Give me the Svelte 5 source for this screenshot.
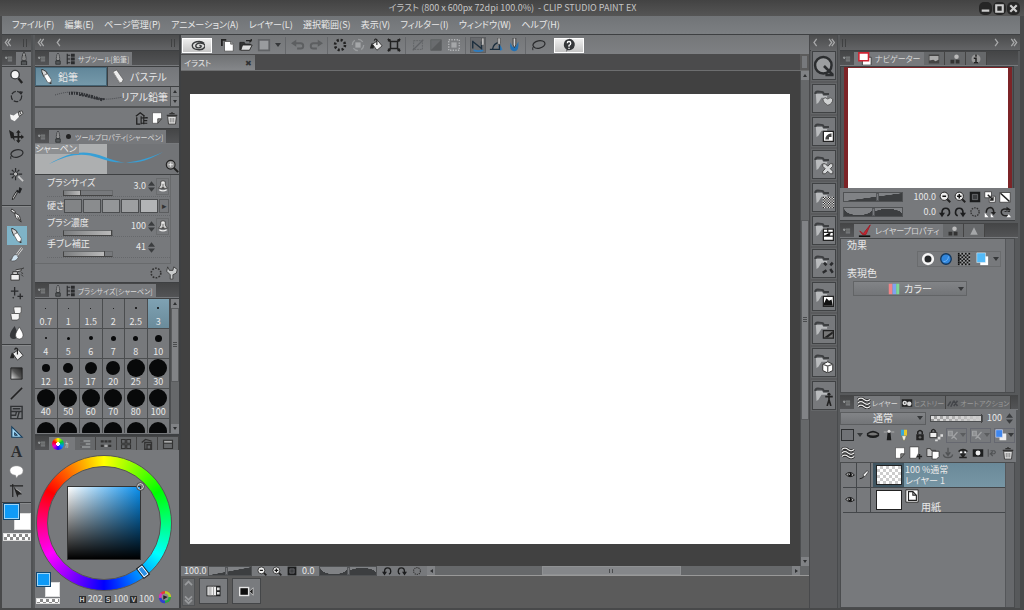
<script>
  const D = '#2a2b2d';
  const W = '#f4f4f4';
  const folder = `<path d="M1 4q0-2 2-2l4 .5 1 1.500h4" fill="none" stroke="#3d3f41" stroke-width="1.600"/><path d="M1.500 4h5l1 1.500h3v1.500H6L3.500 11 2 12z" fill="#b9bbbd"/>`;
  const checks = (x, y, n, c) => {
    let s = '';
    for (let i = 0; i < n; i++) for (let j = 0; j < n; j++) if ((i + j) % 2 === 0) s += `M${x + i} ${y + j}h1v1h-1z`;
    return `<path d="${s}" fill="${c}"/>`;
  };
  const icons = {
    menu: `<path d="M2 5l3 0-1.500 3zM6 5h7M6 8h7M6 11h7" stroke="#999b9d" stroke-width="1.300" fill="#999b9d"/>`,
    nib: `<path d="M8 0C6 3 5.500 6 6 10h4c.5-4 0-7-2-10z" fill="#ccc" stroke="${D}"/><path d="M8 3v7" stroke="${D}"/><path d="M5 10.500h6V15H5z" stroke="${D}" fill="#55585a"/>`,
    sub: `<path d="M3 1v14M3 3h4M3 8h4M3 13h4" stroke="${D}" stroke-width="1.500"/><path d="M8 1h5v4H8zM8 6h5v4H8zM8 11h5v4H8z" fill="${D}"/>`,
    zoom: `<circle cx="6.500" cy="6" r="4.500" fill="${W}" stroke="#3b3d3f" stroke-width="1.500"/><path d="M10 10l4 5" stroke="#222" stroke-width="2.500"/>`,
    rotate: `<circle cx="8" cy="8" r="5.500" fill="none" stroke="${D}" stroke-width="1.300" stroke-dasharray="5 1.500"/><path d="M11 2l4 1-2 3z" fill="${D}"/>`,
    operate: `<path d="M1 7l4 1 4-3 2 4-5 5-4-2z" fill="${W}"/><path d="M10 4l4-1 1 3-4 3z" fill="#ddd" stroke="#444"/><path d="M11 3l2 4" stroke="#333"/>`,
    move: `<path d="M0 2l5 3 1 9-2-3-2 0z" fill="#222"/><path d="M10 4v11M5 9.500h10" stroke="#222" stroke-width="1.800"/><path d="M10 2l2.500 3h-5zM10 16l2.500-3h-5zM16 9.500l-3-2.500v5z" fill="#222"/>`,
    lasso: `<ellipse cx="8.500" cy="7" rx="6.500" ry="4" fill="none" stroke="${D}" stroke-width="1.300" transform="rotate(-12 8 7)"/><path d="M3 9q-2 1-1 4" fill="none" stroke="${D}"/>`,
    wand: `<path d="M7 1v4M7 10v4M1 7.500h4M10 7.500h4M3 3l2 2M11 3L9 5M3 12l2-2" stroke="${D}" stroke-width="1.300"/><circle cx="7" cy="7.500" r="2.300" fill="#bbb" stroke="${D}"/><path d="M10 10l5 5" stroke="#c8c8c8" stroke-width="2"/>`,
    dropper: `<path d="M11 1l3 2-2 4-2-1z" fill="#1f2022"/><path d="M8 5l4 2" stroke="#1f2022" stroke-width="2"/><path d="M9 7l-4 7-1.500.5L4 12l3.500-6z" fill="#ccc" stroke="#222"/>`,
    pen: `<path d="M3 1l4 3-1 2-4-3z" fill="#ddd" stroke="#333"/><path d="M6 5l5 3 2 7-6-5z" fill="${W}" stroke="#333"/><path d="M9 9l3 5" stroke="#333"/>`,
    pencil: `<path d="M3 0l5 3 1 3-4 2-2-5z" fill="#d5d5d5" stroke="#333"/><path d="M5 7l4-2 4 6v5l-4-2z" fill="#fff" stroke="#444" stroke-width=".7"/><path d="M12 13l1 3-2-1z" fill="#111"/>`,
    pastel: `<path d="M2 3l4-2 7 10-1 3-3 1z" fill="#ececec" stroke="#555" stroke-width=".7"/><path d="M2 3l7 11" stroke="#999"/>`,
    brush: `<path d="M14 1L8 9" stroke="#ddd" stroke-width="2.500"/><path d="M14 1L8 9" stroke="#333" stroke-width=".8"/><path d="M8 8q-4 0-5 5l-2 1q6 3 9-3z" fill="#cfe2ef" stroke="#444" stroke-width=".7"/>`,
    airbrush: `<path d="M2 8h9v6H2z" fill="#eee" stroke="#333"/><path d="M4 5h5v3H4zM7 3l6-1v2L9 5" fill="#ccc" stroke="#333"/><path d="M13 6l2 1M13 8l2 2M13 2l3-1" stroke="#333"/>`,
    sparkle: `<path d="M6 1v9M2 5.500h8M12 8v6M9 11h6M4 12l1 1" stroke="${D}" stroke-width="1.400"/>`,
    eraser: `<path d="M5 2l1-1h7v6l-2 1H6z" fill="#f5f5f5" stroke="#444" stroke-width=".8"/><path d="M2 9l1-1h7l1 1v4l-2 2H3z" fill="#f5f5f5" stroke="#444" stroke-width=".8"/><path d="M11 8l2-1v4l-2 3z" fill="#777"/>`,
    blend: `<path d="M6 1C3 5 1 8 1 11a4 4 0 0 0 8 0C9 8 8 5 6 1z" fill="#35373a"/><path d="M11 2C9 6 7 8 7 11a4 4 0 0 0 8 0c0-3-2-5-4-9z" fill="#fff" stroke="#333" stroke-width=".6"/>`,
    bucket: `<path d="M1 12l2-6 4 1-2 5z" fill="#222"/><path d="M4 7l6-4 5 6-6 5z" fill="#eee" stroke="#333"/><path d="M9 8V2q-2-2-3 1" fill="none" stroke="#222" stroke-width="1.300"/>`,
    grad: `<defs><linearGradient id="gg" x1="0" y1="1" x2="1" y2="0"><stop offset="0" stop-color="#eee"/><stop offset=".5" stop-color="#555"/><stop offset="1" stop-color="#222"/></linearGradient></defs><path d="M2 2h12v12H2z" fill="url(#gg)" stroke="#222"/>`,
    line: `<path d="M2 14L14 2" stroke="#222" stroke-width="1.600"/>`,
    frame: `<path d="M2 1.500h12v13H2zM4 4h8M2 7h12M8 7l-1 4H2M11 7l-2 7" fill="none" stroke="#303234" stroke-width="1.500"/>`,
    ruler: `<path d="M3 2l11 11H3z" fill="#a3d8f5" stroke="#173d5c" stroke-width="1.200"/><path d="M6 8l3 3H6z" fill="#77797c" stroke="#173d5c"/>`,
    balloon: `<path d="M8 2c4 0 7 2 7 5s-2 5-5 5l-2 3-1-3C4 12 1 10 1 7s3-5 7-5z" fill="#fff" stroke="#999" stroke-width=".6"/>`,
    vector: `<path d="M1 3h14M4 1v14" stroke="#222" stroke-width="1.200"/><path d="M5 4l9 8-4 .5-1 3z" fill="#222"/><path d="M7 6l6 4" stroke="#aaa"/>`,
    spiral: `<path d="M15 5.500C11 2 2 4 2.500 8.500S13 14 15.500 10 11 4.500 8 6s-2 5 1.500 4.500S12.500 7.500 10 8" fill="none" stroke="#3a3c3e" stroke-width="1.500"/>`,
    newdoc: `<path d="M1 1v8M1 2h5" stroke="#222" stroke-width="2"/><path d="M4 4h7l3 3v8H4z" fill="#fff" stroke="#333" stroke-width=".7"/><path d="M11 4v3h3" fill="#aaa" stroke="#333" stroke-width=".7"/>`,
    open: `<path d="M1 14V5h5l1 2h6v2" fill="#333" stroke="#222"/><path d="M4 8h11l-3 6H2z" fill="#ddd" stroke="#222"/><path d="M8 3h6V1M14 3l-2 2" fill="none" stroke="#222" stroke-width="1.500"/>`,
    save: `<path d="M2 2h12v12H2z" fill="#999b9e" stroke="#606265" stroke-width="2"/>`,
    undo: `<path d="M3 6h8q3 0 3 3t-3 3H7" fill="none" stroke="#5d5f61" stroke-width="2.200"/><path d="M0 6l6-4v8z" fill="#5d5f61"/>`,
    redo: `<path d="M13 6H5q-3 0-3 3t3 3h4" fill="none" stroke="#5d5f61" stroke-width="2.200"/><path d="M16 6l-6-4v8z" fill="#5d5f61"/>`,
    dots: `<circle cx="8" cy="8" r="5.700" fill="none" stroke="#222" stroke-width="3" stroke-dasharray="2.400 2.080"/>`,
    dotsThin: `<circle cx="8" cy="8" r="5.500" fill="none" stroke="#333" stroke-width="1.800" stroke-dasharray="2 1.450"/>`,
    target: `<circle cx="8" cy="8" r="6.500" fill="none" stroke="#999b9d" stroke-width="1.500" stroke-dasharray="6 4"/><path d="M5 5h6v6H5z" fill="#a5a7a9"/>`,
    transform: `<path d="M4 4h8v8H4zM1 1l4 4M15 1l-4 4M1 15l4-4M15 15l-4-4" fill="none" stroke="#222" stroke-width="1.700"/><path d="M1 1h3v3H1zM12 1h3v3h-3zM1 12h3v3H1zM12 12h3v3h-3z" fill="#222"/>`,
    desel: `<path d="M3 3h10v10H3z" fill="none" stroke="#606265" stroke-dasharray="2 1"/><path d="M2 14L14 2" stroke="#606265" stroke-width="1.500"/>`,
    invsel: `<path d="M2 2h12v12H2z" fill="#6a6c6f" stroke="#5d5f61"/><path d="M14 2v12H2z" fill="#595b5d"/>`,
    selfill: `<path d="M2 2h12v12H2z" fill="none" stroke="#b4b6b8" stroke-width="1.500" stroke-dasharray="1.500 1.500"/><path d="M5 5h6v6H5z" fill="#a5a7a9"/>`,
    snap1: `<path d="M3 14q5 2 11 0" stroke="#2c7cc0" stroke-width="2" fill="none"/><path d="M2 3v9M2 4l10 8V4" stroke="#1d2f3e" stroke-width="1.600" fill="none"/><path d="M12 0v7l1.500 2L15 7V0z" fill="#bbb" stroke="#333" stroke-width=".6"/>`,
    snap2: `<path d="M12 9l2 5" stroke="#2c7cc0" stroke-width="3"/><path d="M1 13h11V5q-7 1-8 8" stroke="#1d2f3e" stroke-width="1.600" fill="none"/><path d="M10 0v6l1.500 2L13 6V0z" fill="#bbb" stroke="#333" stroke-width=".6"/>`,
    snap3: `<path d="M4 5q-2 9 4 10t5-11l-3 6H6z" fill="#2471b3"/><path d="M7 0v8l1.500 3L10 8V0z" fill="#ccc" stroke="#222" stroke-width=".8"/>`,
    help: `<path d="M8 1a6.500 6.500 0 1 1-1.500 12.800L5 16l.2-3A6.500 6.500 0 0 1 8 1z" fill="#35373a"/><path d="M6 6q0-2 2-2t2 2-2 2.500V10M8 11v1.500" stroke="#fff" stroke-width="1.500" fill="none"/>`,
    tag: `<path d="M1 6l5-4 5 4M2 7v8h4" fill="none" stroke="#222" stroke-width="1.500"/><path d="M7 6v9M7 8h7v-1M7 14h7M10 11h4M10 6v9" stroke="#222" stroke-width="1.300"/>`,
    page: `<path d="M2 1h12v8l-5 6H2z" fill="#fff" stroke="#333" stroke-width=".7"/><path d="M14 9H9v6z" fill="#888" stroke="#333"/>`,
    pageadd: `<path d="M1 1h10v7l-3 6H1z" fill="#fff" stroke="#333" stroke-width=".7"/><path d="M12 9v6M9 12h6" stroke="#222" stroke-width="1.700"/>`,
    trash: `<path d="M3 6h10l-1 9H4z" fill="#ddd" stroke="#333"/><path d="M2 5h12M5 3h6M8 1v2" stroke="#333" stroke-width="1.500"/><path d="M6 8v5M8 8v5M10 8v5" stroke="#777"/>`,
    mag: `<circle cx="6.500" cy="6.500" r="5" fill="#999" stroke="#222" stroke-width="1.300"/><path d="M4 6.500h5M6.500 4v5" stroke="#eee"/><path d="M10 10l5 5" stroke="#222" stroke-width="2.200"/>`,
    pressure: `<path d="M5 2q3-2 6 0v5l3 4H2l3-4z" fill="#e8e8e8" stroke="#333"/><path d="M3 13q5 3 10 0" stroke="#eee" stroke-width="1.500" fill="none"/><path d="M8 5v6M6 9l2 2 2-2" stroke="#333" fill="none"/>`,
    wrench: `<path d="M3 1l2 4 4 0 1-4 4 3-1 4-4 2v5H6v-5L2 6z" fill="#c8cacb" stroke="#333" stroke-width=".9"/>`,
    zoomout: `<circle cx="7" cy="7" r="5.500" fill="#eee" stroke="#222" stroke-width="1.300"/><path d="M4.500 7h5" stroke="#111" stroke-width="2"/><path d="M11 11l4 4" stroke="#222" stroke-width="2.500"/>`,
    zoomin: `<circle cx="7" cy="7" r="5.500" fill="#eee" stroke="#222" stroke-width="1.300"/><path d="M4 7h6M7 4v6" stroke="#111" stroke-width="2"/><path d="M11 11l4 4" stroke="#222" stroke-width="2.500"/>`,
    fit: `<path d="M1 1h14v14H1z" fill="#1b1c1d"/><path d="M4.500 4.500h7v7h-7z" fill="#3c3e40" stroke="#77797c"/>`,
    rotl: `<path d="M4 12V9q0-6 5-6t5 6q0 3-3 4" fill="none" stroke="#1c1d1e" stroke-width="2.200"/><path d="M0 9h8l-4 6z" fill="#1c1d1e"/>`,
    rotr: `<path d="M12 12V9q0-6-5-6T2 9q0 3 3 4" fill="none" stroke="#1c1d1e" stroke-width="2.200"/><path d="M16 9H8l4 6z" fill="#1c1d1e"/>`,
    fitnav: `<path d="M1 1h9v8H1zM7 7h8v8H7z" fill="#fff" stroke="#333"/><path d="M5 5l7 7M12 8v4H8" stroke="#222" stroke-width="1.800" fill="none"/>`,
    fitdiag: `<path d="M1 2h14v13H1z" fill="#fff" stroke="#333"/><path d="M2 3l12 11" stroke="#222" stroke-width="2.200"/>`,
    fliph: `<path d="M3 9q0-7 6-7 4 1 4 7" fill="none" stroke="#222" stroke-width="2"/><path d="M9 8h7l-3 4z" fill="#222"/><path d="M1 9l5 6H1zM13 15l-4-5v5z" fill="#fff"/>`,
    flipv: `<path d="M14 5Q3 2 3 8t9 5" fill="none" stroke="#222" stroke-width="2"/><path d="M10 1l6 4-6 3zM6 8h9l-2-3" fill="#222"/><path d="M10 15h6l-3-4z" fill="#fff"/>`,
    navi: `<path d="M5 6h10v9H5z" fill="#fff" stroke="#333"/><path d="M1 1h11v9H1z" fill="#fff" stroke="#cf2433" stroke-width="1.800"/>`,
    pic: `<path d="M1 2h14v12H1z" fill="#444"/><path d="M2 10V4h12v5l-4 2-3-2z" fill="#aaa"/>`,
    people: `<circle cx="10" cy="5" r="3" fill="#bbb"/><path d="M2 9h5v5H2zM9 9h5v5H9z" fill="#333"/>`,
    info: `<circle cx="8" cy="8" r="6" fill="#999"/><path d="M8 2v3M8 6v7M5 7h3M5 13h6" stroke="#222" stroke-width="2"/>`,
    redpen: `<path d="M2 8l4 3 8-10-5 11H5z" fill="#c52632" stroke="#a01c26"/><path d="M1 13h13v3H1z" fill="#0e0e0e"/>`,
    waves: `<path d="M1 4q3.500-3 7 0t7 0M1 8q3.500-3 7 0t7 0M1 12q3.500-3 7 0t7 0" fill="none" stroke="#222" stroke-width="3.200"/><path d="M1 4q3.500-3 7 0t7 0M1 8q3.500-3 7 0t7 0M1 12q3.500-3 7 0t7 0" fill="none" stroke="#eee" stroke-width="1.300"/>`,
    tri: `<path d="M8 3l5 10H3z" fill="#a5a7a9"/>`,
    film: `<path d="M1 3h14v10H1z" fill="#222"/><circle cx="5" cy="8" r="3" fill="#ddd"/><circle cx="11" cy="9" r="3" fill="#ddd"/><circle cx="5" cy="8" r="1" fill="#222"/>`,
    script: `<path d="M1 12l4-6M5 13l4-8M9 12l5-7M9 5l5 7" stroke="#44464a" stroke-width="2"/>`,
    edge: `<circle cx="8" cy="8" r="5.500" fill="#26282a" stroke="#f6f6f6" stroke-width="3"/>`,
    blue: `<circle cx="8" cy="8" r="6" fill="#3186dc" stroke="#14375c" stroke-width="1.500"/><path d="M5 11q5 0 6-6" fill="none" stroke="#74b6f5"/>`,
    tone: `<path d="M1 1h14v14H1z" fill="#9b9d9f"/>` + [1, 3, 5, 7, 9, 11, 13].map((y, r) => [1, 5, 9, 13].map((x) => `<path d="M${x + (r % 2 ? 2 : 0) > 13 ? 1 : x + (r % 2 ? 2 : 0)} ${y}h2v2h-2z" fill="#111"/>`).join('')).join(''),
    layercol: `<path d="M6 5h9v10H6z" fill="#fff"/><path d="M2 1h10v11H2z" fill="#53baf8" stroke="#eee" stroke-width=".6"/>`,
    rgb: `<path d="M1 1h5v14H1z" fill="#f08487"/><path d="M6 1h5v14H6z" fill="#7fa3ef"/><path d="M11 1h4v14h-4z" fill="#7ed796"/>`,
    mask: `<path d="M1 6q7-6 14 0v3q-7 5-14 0z" fill="#1c1d1e"/><path d="M2 7q6-4 12 0-6 3-12 0z" fill="#777"/>`,
    lighthouse: `<path d="M6 5h4l1 10H5z" fill="#1c1d1e"/><circle cx="8" cy="3" r="2" fill="#ddd"/><path d="M1 4h4M11 4h4" stroke="#bbb"/>`,
    marker: `<path d="M4 1h4v8H4z" fill="#36a9d8"/><path d="M8 1h4v8H8z" fill="#e6c72c"/><path d="M5 9h6l-2 6H7z" fill="#eceae0" stroke="#6d6e3f" stroke-width=".5"/>`,
    lock: `<path d="M3 7h10v8H3z" fill="#222"/><path d="M5 7V4q3-4 6 0v3" fill="none" stroke="#222" stroke-width="2"/><path d="M8 9v4M6 11h4" stroke="#888"/>`,
    locka: `<path d="M1 5h8v6H1z" fill="#eee" stroke="#222"/><path d="M3 5V3q2-3 4 0v2" fill="none" stroke="#222" stroke-width="1.500"/><path d="M10 10h3v3h-3zM13 7h3v3h-3zM7 13h3v2H7z" fill="#ddd"/>`,
    off: `<path d="M2 3h5v6H2zM6 13l8-9M8 9l5 5" fill="#8e9092" stroke="#a0a2a4" stroke-width="1.600"/>`,
    palette: `<path d="M6 6h9v9H6z" fill="#eee"/><path d="M1 1h9v10H1z" fill="#3f87ee" stroke="#dde" stroke-width=".8"/>`,
    folders: `<path d="M1 3h4l1 2h5v7H1z" fill="#ccc" stroke="#333"/><path d="M7 6h8v6l-3 3H7z" fill="#fff" stroke="#333"/>`,
    down: `<path d="M8 1v9M5 7l3 4 3-4M2 10q0 4 6 4t6-4" fill="none" stroke="#515355" stroke-width="1.800"/>`,
    downd: `<path d="M2 6q6-5 12 0M8 4v8M5 9l3 4 3-4M3 14h10" fill="none" stroke="#222" stroke-width="2"/><path d="M4 7h3M10 7h2" stroke="#fff" stroke-width="2"/>`,
    maskbtn: `<path d="M1 3h14v10H1z" fill="#1d1e1f"/><circle cx="8" cy="8" r="3.300" fill="#eee"/>`,
    arr: `<path d="M3 3v10M6 5h5q3 2 0 4H6l3-3M6 9l3 3" fill="none" stroke="#515355" stroke-width="1.500"/>`,
    eye: `<path d="M1 7q7-7 14 1-7 6-14-1z" fill="#aaa" stroke="#1c1d1e" stroke-width="1.500"/><circle cx="8" cy="7.500" r="3" fill="#111"/><circle cx="7" cy="6.500" r="1" fill="#fff"/>`,
    edit: `<path d="M1 14q6 0 7-5" stroke="#222" stroke-width="1.500" fill="none"/><path d="M7 7l6-6 2 2-5 7-3 1z" fill="#eee" stroke="#222"/>`,
    paper: `<path d="M1 1h14v14H1z" fill="#fff" stroke="#222"/><path d="M4 3h5l4 4v6H4zM9 3v4h4" fill="#fff" stroke="#222" stroke-width="1.300"/>`,
    wheel2: `<circle cx="8" cy="8" r="7" fill="#e73a36"/><path d="M8 8L8 1A7 7 0 0 1 15 8z" fill="#b3d22c"/><path d="M8 8h7a7 7 0 0 1-7 7z" fill="#22a949"/><path d="M8 8v7A7 7 0 0 1 1 9z" fill="#2f3fd0"/><path d="M8 8L1 9a7 7 0 0 1 2-6z" fill="#cf35c4"/><circle cx="8" cy="8" r="4" fill="#8b8d8f"/><path d="M6 6l5 2-5 3z" fill="#222"/>`,
    t1: `<path d="M1 4h14M1 8h14M1 12h14" stroke="#97999b" stroke-width="2"/><path d="M1 4h5M1 8h8M1 12h3" stroke="#333" stroke-width="1.500"/>`,
    t2: `<path d="M1 3h4v3H1zM6 3h4v3H6zM11 3h4v3h-4zM1 9h4v3H1zM11 9h4v3h-4z" fill="#333"/><path d="M6 9h4v3H6z" fill="#aaa"/>`,
    t3: `<path d="M2 2h5v5H2zM9 2h5v5H9zM2 9h5v5H2zM9 9h5v5H9z" fill="none" stroke="#333" stroke-width="1.500"/>`,
    t4: `<path d="M1 6l5-4 8 2M5 6h9v9H5zM8 9h5v6H8z" fill="none" stroke="#333" stroke-width="1.700"/>`,
    t5: `<path d="M2 3h12v11H2zM2 7h12" fill="none" stroke="#333" stroke-width="1.500"/><path d="M3 4h10v2H3z" fill="#aaa"/>`,
    timeline: `<path d="M0 2h16v12H0z" fill="#1d1e1f"/><path d="M1 3h10v10H1z" fill="#eee"/><path d="M3 3v10M5 3v10M8 3v10" stroke="#999"/><path d="M12 4h3v3h-3zM12 9h3v3h-3z" fill="#ddd"/>`,
    camera: `<path d="M0 3h11v10H0z" fill="#e5e5e5"/><path d="M1.500 4.500h8v7h-8z" fill="#0e0e0e"/><path d="M11 8l4-4v8z" fill="#222" stroke="#ddd" stroke-width=".8"/>`,
    Q: `<circle cx="7.500" cy="7.500" r="6" fill="#9c9ea0" stroke="#2b2d2f" stroke-width="1.800"/><path d="M8 8l6.500 6.500M9 14.500h6" stroke="#2b2d2f" stroke-width="1.900"/>`,
    f1: folder + `<path d="M7 8q2-2 4 0 2-2 4 0 0 4-4 5-4-2-4-5z" fill="#cfd1d2" stroke="#444" stroke-width=".6"/>`,
    f2: folder + `<path d="M7.500 7.500h8v8h-8z" fill="#fff" stroke="#222"/><path d="M9 14q0-4 5-5v3l-2 0v2z" fill="#444"/>`,
    f3: folder + `<path d="M7 7l2 0 2 2 2-2h2v2l-2 2 2 2v2h-2l-2-2-2 2H7v-2l2-2-2-2z" fill="#d5d7d8" stroke="#333" stroke-width=".6"/>`,
    f4: folder + `<path d="M7 7h9v9H7z" fill="#eee"/>` + checks(7, 7, 9, '#222'),
    f5: folder + `<path d="M7.500 6.500h8v9h-8z" fill="#fff" stroke="#222"/><path d="M8 9h8M11 6v3M8 12h4l1-3M12 12h4" stroke="#222"/>`,
    f6: folder + `<path d="M8 7l2 2M15 7l-2 2M7 15l3-2M15 15l-2-3" stroke="#2a2b2d" stroke-width="2"/>`,
    f7: folder + `<path d="M7.500 7.500h8v8h-8z" fill="#fff" stroke="#222"/><path d="M8 15v-2l2-4 2 2 2-1 1 5z" fill="#111"/>`,
    f8: folder + `<path d="M7.500 8.500h8v6h-8z" fill="#777" stroke="#222"/><path d="M8 14l7-5v2l-4 3z" fill="#222"/>`,
    f9: folder + `<path d="M7 9l4-2 4 2v5l-4 2-4-2z" fill="#fff" stroke="#333" stroke-width=".8"/><path d="M7 9l4 1.500L15 9M11 10.500V16" fill="none" stroke="#555"/>`,
    f10: folder + `<circle cx="12" cy="6.500" r="1.200" fill="#222"/><path d="M9 8.500h6M12 8v4M12 11l-1.500 5M12 11l1.500 5" stroke="#222" stroke-width="1.300"/>`
  };

  const menus = ['ファイル(F)', '編集(E)', 'ページ管理(P)', 'アニメーション(A)', 'レイヤー(L)', '選択範囲(S)', '表示(V)', 'フィルター(I)', 'ウィンドウ(W)', 'ヘルプ(H)'];
  const toolGroups = [
    [['zoom', 'ズーム'], ['rotate', '回転'], ['operate', '操作'], ['move', 'レイヤー移動'], ['lasso', '選択範囲'], ['wand', '自動選択'], ['dropper', 'スポイト']],
    [['pen', 'ペン'], ['pencil', '鉛筆'], ['brush', '筆'], ['airbrush', 'エアブラシ'], ['sparkle', 'デコレーション'], ['eraser', '消しゴム'], ['blend', '色混ぜ']],
    [['bucket', '塗りつぶし'], ['grad', 'グラデーション'], ['line', '図形'], ['frame', 'コマ枠'], ['ruler', '定規'], ['text', 'テキスト'], ['balloon', 'フキダシ'], ['vector', '線修正']]
  ];
  const sizes = [
    ['0.7', 1], ['1', 1], ['1.5', 1], ['2', 1], ['2.5', 2], ['3', 2],
    ['4', 2], ['5', 3], ['6', 4], ['7', 5], ['8', 5], ['10', 7],
    ['12', 8], ['15', 10], ['17', 12], ['20', 14], ['25', 18], ['30', 18],
    ['40', 18], ['50', 18], ['60', 18], ['70', 18], ['80', 18], ['100', 18]
  ];
  const docks = ['Q', 'f1', 'f2', 'f3', 'f4', 'f5', 'f6', 'f7', 'f8', 'f9', 'f10'];
  let size = $state('3');
  let tool = $state('pencil');
</script>

{#snippet ico(name, s = 's14')}
  <svg class="ico {s}" viewBox="0 0 16 16" aria-hidden="true">{@html icons[name]}</svg>
{/snippet}
{#snippet btn(name, label, s = 's14')}
  <button class="plain" aria-label={label}>{@render ico(name, s)}</button>
{/snippet}
{#snippet chev(kind)}
  <svg class="chev" viewBox="0 0 8 10" aria-hidden="true">
    <path d={{ ll: 'M4 1L1 5l3 4M7 1L4 5l3 4', l: 'M5 1L2 5l3 4', r: 'M3 1l3 4-3 4', rr: 'M1 1l3 4-3 4M4 1l3 4-3 4' }[kind]} />
  </svg>
{/snippet}
{#snippet spin()}
  <svg class="spin" viewBox="0 0 8 12" aria-hidden="true"><path d="M4 0l4 5H0zM4 12l4-5H0z" /></svg>
{/snippet}
{#snippet vbar(cls)}
  <div class="vbar {cls}"><i class="up"></i><b></b><i class="dn"></i></div>
{/snippet}
{#snippet pair()}
  <div class="pair"><span class="back"></span><span class="fore"></span><span class="clear"></span></div>
{/snippet}

<div class="app">
  <header class="title">
    <h1>イラスト (800 x 600px 72dpi 100.0%)&nbsp; - CLIP STUDIO PAINT EX</h1>
    <div class="win">
      <button aria-label="最小化"><svg viewBox="0 0 12 12"><path d="M2.500 8h7" /></svg></button>
      <button aria-label="最大化"><svg viewBox="0 0 12 12"><path d="M3 3h6v6H3z" /></svg></button>
      <button aria-label="閉じる"><svg viewBox="0 0 12 12"><path d="M3 3l6 6M9 3L3 9" /></svg></button>
    </div>
  </header>
  <nav class="menu">
    <div class="items">
      {#each menus as m}<button>{m}</button>{/each}
    </div>
  </nav>

  <main>
    <aside class="tools">
      <div class="grip">{@render chev('ll')}<em></em></div>
      <div class="tabs"><span class="mi">{@render ico('menu', 's10')}</span><span class="tab on">{@render ico('nib')}</span></div>
      <div class="toolbody">
        {#each toolGroups as g}
          <div class="group" class:long={g.length > 7}>
            {#each g as [t, label]}
              <button class:sel={tool === t} aria-label={label} onclick={() => (tool = t)}>
                {#if t === 'text'}<span class="A">A</span>{:else}{@render ico(t, 's15')}{/if}
              </button>
            {/each}
          </div>
        {/each}
        {@render pair()}
      </div>
    </aside>

    <aside class="left">
      <div class="grip">{@render chev('ll')}{@render chev('l')}<em></em></div>
      <section class="subtool">
        <div class="tabs"><span class="mi">{@render ico('menu', 's10')}</span><span class="tab on">{@render ico('nib', 's12')}{@render ico('sub', 's12')}サブツール[鉛筆]</span></div>
        <div class="two">
          <button class="sel">{@render ico('pencil', 's15')}鉛筆</button>
          <button>{@render ico('pastel', 's15')}パステル</button>
        </div>
        <div class="real">
          <svg viewBox="0 0 80 16" aria-hidden="true">
            <path d="M6 6C22 1 30 3 42 7s16 4 32 1" fill="none" stroke="#4a4c50" stroke-width="1" stroke-dasharray="1 1" />
            <path d="M20 4.500C32 3 44 8 54 11" fill="none" stroke="#303236" stroke-width="3" stroke-dasharray="1 1 2 1" />
            <path d="M30 6C38 6 46 11 56 10" fill="none" stroke="#303236" stroke-width="2" stroke-dasharray="2 1" />
          </svg>
          <span>リアル鉛筆</span>
          {@render vbar('nothumb')}
        </div>
        <div class="foot">{@render btn('tag', '追加素材')}{@render btn('page', '複製', 's12')}{@render btn('trash', '削除')}</div>
      </section>

      <section class="prop">
        <div class="tabs"><span class="mi">{@render ico('menu', 's10')}</span><span class="tab on">{@render ico('nib', 's12')}<u class="dot"></u>ツールプロパティ[シャーペン]</span></div>
        <div class="preview">
          <span>シャーペン</span>
          <svg viewBox="0 0 144 29" aria-hidden="true"><path d="M14 20C34 8 48 6 64 11s32 16 64-3C96 22 80 20 64 14S34 10 14 20z" fill="#379fd6" /></svg>
          {@render btn('mag', '詳細')}
        </div>
        <div class="rows">
          <div class="row">
            <label for="bs">ブラシサイズ</label><output>3.0</output>{@render spin()}<button class="press" aria-label="筆圧">{@render ico('pressure', 's12')}</button>
            <input id="bs" type="range" value="34" style="--v:34%" />
          </div>
          <div class="row hard">
            <span>硬さ</span>
            <div class="boxes">{#each [1, 2, 3, 4, 5] as h}<button class="h{h}" aria-label="硬さ {h}"></button>{/each}</div>
            <button class="next" aria-label="次へ">▸</button>
          </div>
          <div class="row">
            <label for="bd">ブラシ濃度</label><output>100</output>{@render spin()}<button class="press" aria-label="筆圧">{@render ico('pressure', 's12')}</button>
            <input id="bd" type="range" value="100" style="--v:100%" />
          </div>
          <div class="row">
            <label for="st">手ブレ補正</label><output>41</output>{@render spin()}<i></i>
            <input id="st" type="range" value="85" style="--v:85%" />
          </div>
        </div>
        <div class="foot">{@render btn('dotsThin', '初期設定')}{@render btn('wrench', '設定')}</div>
      </section>

      <section class="bsize">
        <div class="tabs"><span class="mi">{@render ico('menu', 's10')}</span><span class="tab on">{@render ico('nib', 's12')}{@render ico('sub', 's12')}ブラシサイズ[シャーペン]</span></div>
        <div class="gridwrap">
          <div class="sizes">
            {#each sizes as [n, d]}
              <button class:sel={size === n} onclick={() => (size = n)}><span><i style="width:{d}px;height:{d}px"></i></span>{n}</button>
            {/each}
            {#each [1, 2, 3, 4, 5, 6] as n}<div class="cut"><i></i></div>{/each}
          </div>
          {@render vbar('brushbar')}
        </div>
      </section>

      <section class="color">
        <div class="tabs">
          <span class="mi">{@render ico('menu', 's10')}</span>
          <span class="tab on wheeltab"><i class="mini"></i>ｶ</span>
          {#each ['t1', 't2', 't3', 't4', 't5'] as t}<span class="tab off">{@render ico(t, 's12')}</span>{/each}
        </div>
        <div class="wheelbox">
          <div class="wheel"><div class="hole"><div class="sq"><i></i></div></div><b></b></div>
          <div class="cfoot">
            {@render pair()}
            <div class="hsv"><kbd>H</kbd>202<kbd>S</kbd>100<kbd>V</kbd>100</div>
            {@render btn('wheel2', '色空間の切り替え')}
          </div>
        </div>
      </section>
    </aside>

    <section class="center">
      <div class="cmd">
        <button class="lit" aria-label="CLIP STUDIO">{@render ico('spiral', 's15')}</button>
        <div class="cg">{@render btn('newdoc', '新規')}{@render btn('open', '開く')}{@render btn('save', '保存')}<span class="caret"></span></div>
        <div class="cg sep">{@render btn('undo', '取り消し')}{@render btn('redo', 'やり直し')}</div>
        <div class="cg sep">{@render btn('dots', '消去')}{@render btn('target', '選択範囲外を消去')}{@render btn('bucket', '塗りつぶし')}{@render btn('transform', '拡大・縮小・回転')}</div>
        <div class="cg sep">{@render btn('desel', '選択を解除')}{@render btn('invsel', '選択範囲を反転')}{@render btn('selfill', '選択範囲の境界線')}</div>
        <div class="cg sep snaps">{@render btn('snap1', '定規にスナップ')}{@render btn('snap2', '特殊定規にスナップ')}{@render btn('snap3', 'グリッドにスナップ')}</div>
        <div class="cg sep">{@render btn('lasso', 'アシスタント', 's15')}</div>
        <button class="lit help" aria-label="ヘルプ">{@render ico('help')}</button>
      </div>
      <div class="doctabs"><button class="doc">イラスト<span>✖</span></button><i class="tick"></i></div>
      <div class="work">
        <div class="desk"><div class="sheet"></div></div>
        {@render vbar('deskbar')}
      </div>
      <div class="status">
        <output>100.0</output><input class="wedge" type="range" aria-label="表示倍率" value="40" />
        {@render btn('zoomout', '縮小', 's10')}{@render btn('zoomin', '拡大', 's10')}{@render btn('fit', '100%', 's10')}
        <output class="ang">0.0</output><input class="bell" type="range" aria-label="表示角度" value="50" />
        {@render btn('rotl', '左回転', 's10')}{@render btn('rotr', '右回転', 's10')}{@render btn('dotsThin', '回転をリセット', 's10')}
        <div class="hbar"><i class="lf"></i><div><b></b></div><i class="rt"></i></div>
      </div>
      <div class="bottom">
        <div class="bchev"><svg viewBox="0 0 12 30" aria-hidden="true"><path d="M2 7l4-4 4 4M2 20l4 4 4-4M2 24l4 4 4-4" /></svg></div>
        <button aria-label="タイムライン">{@render ico('timeline', 's17')}</button>
        <button aria-label="アニメーション">{@render ico('camera', 's15')}</button>
      </div>
    </section>

    <aside class="dock">
      <div class="grip">{@render chev('l')}{@render chev('rr')}</div>
      {#each docks as d}<button aria-label="素材 {d}">{@render ico(d, d === 'Q' ? 's22' : 's20')}</button>{/each}
    </aside>

    <aside class="right">
      <div class="grip end"><em></em>{@render chev('r')}{@render chev('rr')}</div>
      <section class="nav">
        <div class="tabs"><span class="mi">{@render ico('menu', 's10')}</span><span class="tab on">{@render ico('navi')}ナビゲーター</span>
          {#each ['pic', 'people', 'info'] as t}<span class="tab off">{@render ico(t, 's12')}</span>{/each}</div>
        <div class="view"><div></div></div>
        <div class="navctl">
          <input class="wedge" type="range" aria-label="倍率" value="58" /><output>100.0</output>
          {@render btn('zoomout', '縮小', 's12')}{@render btn('zoomin', '拡大', 's12')}{@render btn('fit', '100%', 's12')}{@render btn('fitnav', 'フィッティング', 's12')}{@render btn('fitdiag', '全体表示', 's12')}
          <input class="bell" type="range" aria-label="角度" value="50" /><output>0.0</output>
          {@render btn('rotl', '左回転', 's12')}{@render btn('rotr', '右回転', 's12')}{@render btn('dotsThin', 'リセット', 's12')}{@render btn('fliph', '左右反転', 's12')}{@render btn('flipv', '上下反転', 's12')}
        </div>
      </section>
      <section class="lprop">
        <div class="tabs"><span class="mi">{@render ico('menu', 's10')}</span><span class="tab on">{@render ico('redpen')}レイヤープロパティ</span>
          {#each ['people', 'tri'] as t}<span class="tab off">{@render ico(t, 's12')}</span>{/each}</div>
        <div class="lbody">
          <div class="lmain">
            <h2>効果</h2>
            <div class="fx">{@render btn('edge', '境界効果')}{@render btn('blue', '質感')}{@render btn('tone', 'トーン')}{@render btn('layercol', 'レイヤーカラー')}<span class="caret"></span></div>
            <h2>表現色</h2>
            <button class="combo">{@render ico('rgb', 's12')}カラー<span class="caret"></span></button>
          </div>
          <div class="trough"></div>
        </div>
      </section>
      <section class="layers">
        <div class="tabs"><span class="mi">{@render ico('menu', 's10')}</span><span class="tab on">{@render ico('waves')}レイヤー</span><span class="tab off">{@render ico('film', 's12')}ヒストリー</span><span class="tab off">{@render ico('script', 's12')}オートアクション</span></div>
        <div class="blend"><button class="mode">通常<span class="caret"></span></button><input class="opac" type="range" aria-label="不透明度" value="100" /><output>100</output>{@render spin()}</div>
        <div class="tb"><button class="plain box" aria-label="パレットカラー"></button><span class="caret"></span>{@render btn('mask', 'クリップ')}{@render btn('lighthouse', '参照', 's12')}{@render btn('marker', '下描き', 's12')}{@render btn('lock', 'ロック', 's12')}{@render btn('locka', '透明ピクセルをロック')}<span class="fr">{@render ico('off', 's12')}<span class="caret dim"></span></span><span class="fr">{@render ico('off', 's12')}<span class="caret dim"></span></span><span class="fr">{@render ico('palette', 's12')}<span class="caret"></span></span></div>
        <div class="tb">{@render btn('waves', '2ペイン')}<span class="sp"></span>{@render btn('page', '新規ラスター', 's12')}{@render btn('pageadd', '新規ベクター')}{@render btn('folders', '新規フォルダー')}{@render btn('down', '転写', 's12')}{@render btn('downd', '結合', 's12')}{@render btn('maskbtn', 'マスク', 's12')}{@render btn('arr', '適用', 's12')}{@render btn('trash', '削除')}</div>
        <div class="lbody">
          <ul>
            <li class="sel">{@render btn('eye', '表示', 's10')}<span class="pn">{@render ico('edit', 's10')}</span><div class="thumbcell"><i class="thumb chk"></i></div><p>100 %通常<br />レイヤー 1</p></li>
            <li>{@render btn('eye', '表示', 's10')}<span class="pn"></span><div class="thumbcell"><i class="thumb"></i></div><span class="ps">{@render ico('paper')}</span><p class="low">用紙</p></li>
          </ul>
          <div class="trough"></div>
        </div>
      </section>
    </aside>
  </main>
</div>

<style>
  :global(body) { margin: 0; background: #4b4b4c; }
  .app {
    --p: #77797c; --d: #4e4f51; --line: #3e4042;
    min-height: 100vh; box-sizing: border-box; padding: 0 4px 2px 2px;
    display: flex; flex-direction: column; background: #48494a; color: #e8e8e8;
    font: 9px/10px "Noto Sans CJK JP", "Noto Sans", sans-serif; font-feature-settings: "palt";
  }
  .app :global(*) { box-sizing: border-box; }
  button { font: inherit; font-feature-settings: inherit; color: inherit; padding: 0; margin: 0; border: 0; background: none; display: flex; align-items: center; justify-content: center; white-space: nowrap; }
  h1, h2, p, ul { margin: 0; padding: 0; font: inherit; list-style: none; }
  input { margin: 0; min-width: 0; appearance: none; }
  .ico { display: block; flex: none; width: 14px; height: 14px; }
  .s10 { width: 10px; height: 10px; } .s12 { width: 12px; height: 12px; } .s15 { width: 15px; height: 15px; }
  .s17 { width: 17px; height: 14px; } .s20 { width: 20px; height: 20px; } .s22 { width: 22px; height: 22px; }

  .title { height: 16px; display: flex; align-items: center; background: linear-gradient(#434343, #555); margin: 0 -4px 0 -2px; padding: 0 4px 0 46px; }
  h1 { flex: 1; text-align: center; color: #c4c4c4; }
  .win { display: flex; gap: 1px; }
  .win svg { width: 13px; height: 13px; background: #262626; border-radius: 5px; display: block; }
  .win path { fill: none; stroke: #ccc; stroke-width: 2; }
  .menu { height: 19px; flex: none; background: linear-gradient(#717477, #7c7f82); border-bottom: 1px solid var(--line); }
  .items { display: flex; justify-content: space-between; width: 548px; height: 18px; margin-left: 10px; }

  main { flex: 1; display: grid; grid-template-columns: 31px 148px minmax(0, 1fr) 28px 182px; }
  .tools, .left, .dock, .right, .center { display: flex; flex-direction: column; min-width: 0; }
  .tools { background: var(--p); border-right: 2px solid #505254; }
  .left, .right { background: #57595b; }
  .left { border-right: 2px solid var(--line); padding-left: 2px; }
  .right { padding-left: 2px; }
  section { min-width: 0; }
  .grip { height: 16px; flex: none; display: flex; align-items: center; gap: 10px; padding: 0 2px; background: linear-gradient(#4b4c4d, #636466); border-bottom: 1px solid var(--line); }
  .grip em { margin-left: auto; width: 6px; height: 8px; background: repeating-linear-gradient(90deg, #404142 0 1px, transparent 1px 3px); }
  .grip.end em { margin: 0 auto 0 0; }
  .chev { width: 8px; height: 9px; }
  .chev path { fill: none; stroke: #a8a9aa; stroke-width: 1.4; }
  .tabs { height: 15px; flex: none; display: flex; background: linear-gradient(#444546, #535456); overflow: hidden; padding-top: 1px; border-bottom: 1px solid var(--p); }
  .mi { width: 14px; flex: none; display: flex; align-items: center; justify-content: center; }
  .tab { display: flex; align-items: center; gap: 1px; padding: 0 3px; white-space: nowrap; font-size: 7px; color: #d8d8d8; flex: none; }
  .tab.on { background: var(--p); }
  .tools .tab { padding: 0 1px; }
  .tab.off { background: #66686a; border-right: 1px solid #444; color: #999; padding: 0 4px; }
  .right .tab { gap: 3px; }
  .right .tab.on { padding: 0 4px; }
  .nav .tab.on, .lprop .tab.on { font-size: 8px; }
  .plain { flex: none; }
  .caret { width: 0; height: 0; border: 3px solid transparent; border-top: 4px solid #36383a; border-bottom: 0; flex: none; }
  .caret.dim { border-top-color: #5b5d5f; }

  .toolbody { flex: 1; border-top: 1px solid var(--line); }
  .group { height: 139px; display: flex; flex-direction: column; justify-content: space-between; border-bottom: 1px solid #3b3d3f; box-shadow: 0 1px #888a8c; padding-bottom: 2px; }
  .group.long { height: 158px; }
  .group button { width: 20px; height: 19px; margin: 0 auto; }
  .group button.sel { background: #7fb3c7; }
  .A { font: bold 16px/18px "Liberation Serif", serif; color: #2b2d2f; }
  .pair { position: relative; width: 28px; height: 38px; margin: 0 0 0 1px; }
  .pair span { position: absolute; }
  .pair .fore { left: 0; top: 0; width: 17px; height: 17px; background: #0f9af6; border: 1px solid #14466d; box-shadow: inset 0 0 0 1px #9fd4f5; }
  .pair .back { right: 0; top: 10px; width: 17px; height: 17px; background: #fff; border: 1px solid #ddd; }
  .pair .clear { left: 0; right: 0; bottom: 0; height: 8px; background: #fff conic-gradient(#8a8a8a 25%, #fff 0 50%, #8a8a8a 0 75%, #fff 0) 0 0 / 6px 6px; border: 1px solid #ddd; }

  .left section { background: var(--p); flex: none; }
  .two { display: grid; grid-template-columns: 72px 1fr; gap: 1px; background: var(--line); padding: 1px 0; }
  .two button { height: 19px; justify-content: flex-start; gap: 4px; padding-left: 3px; background: linear-gradient(#74767a, #7f8184); font-size: 10px; }
  .two .sel { background: linear-gradient(#62879a, #7599aa); border: 1px solid #456475; }
  .real { height: 21px; display: grid; grid-template-columns: 84px minmax(0, 1fr) 9px; align-items: center; border-bottom: 2px solid #505254; }
  .real svg { width: 80px; height: 16px; margin-left: 14px; }
  .real span { text-align: right; font-size: 10px; line-height: 12px; white-space: nowrap; padding-right: 2px; }
  .foot { height: 20px; display: flex; justify-content: flex-end; align-items: center; gap: 2px; }
  .vbar { display: flex; flex-direction: column; align-self: stretch; width: 9px; flex: none; background: #66686a; border-left: 1px solid #4c4e50; }
  .vbar i { height: 9px; flex: none; background: #808285; display: grid; place-items: center; }
  .vbar i::after { content: ""; border: 2px solid transparent; border-bottom: 3px solid #2f3133; border-top: 0; }
  .vbar .dn { margin-top: auto; }
  .vbar .dn::after { border: 2px solid transparent; border-top: 3px solid #2f3133; border-bottom: 0; }
  .vbar b { background: repeating-linear-gradient(#4a4c4e 0 1px, transparent 1px 2px) center / 4px 6px no-repeat, #818386; border: 1px solid #5a5c5e; }
  .nothumb b { display: none; }

  .subtool { height: 77px; }
  .prop { height: 154px; border-top: 1px solid var(--line); }
  .bsize { height: 152px; border-top: 1px solid var(--line); }
  .left .color { flex: 1; display: flex; flex-direction: column; border-top: 2px solid var(--line); }
  .dot { width: 5px; height: 5px; border-radius: 3px; background: #222; margin: 0 3px 0 1px; }
  .preview { height: 31px; position: relative; background: linear-gradient(90deg, #adafb0 72px, #727477 72px); border-bottom: 1px solid var(--line); }
  .preview span { position: absolute; background: #8e9092; font-size: 9px; padding-right: 2px; }
  .preview > svg { width: 100%; height: 29px; display: block; }
  .preview .plain { position: absolute; right: 0; bottom: 1px; }
  .rows { height: 89px; margin-right: 8px; padding: 1px 0 0 12px; border-right: 1px solid #686a6c; border-bottom: 1px solid #686a6c; }
  .row { height: 21px; display: grid; grid-template-columns: 1fr 20px 10px 14px; grid-template-rows: 13px 7px; align-items: center; border-bottom: 1px dotted #66686b; }
  .row label, .hard span { font-size: 9px; line-height: 12px; white-space: nowrap; }
  .row output { grid-row: 1 / 3; grid-column: 2; text-align: right; }
  .row .spin { grid-row: 1 / 3; grid-column: 3; margin-left: 2px; }
  .press { grid-row: 1 / 3; grid-column: 4; width: 13px; height: 17px; border: 1px solid #6a6c6e; }
  .spin { width: 7px; height: 11px; flex: none; }
  .spin path { fill: #3b3d3f; }
  .row input { grid-row: 2; grid-column: 1; width: 50px; height: 6px; margin-left: 16px; background: linear-gradient(90deg, #7b7d7f, #bbb) 0 0 / var(--v) 100% no-repeat; border: 1px solid #444; border-top-color: #66686a; border-right-color: #66686a; }
  .row input::-webkit-slider-thumb { appearance: none; width: 1px; height: 6px; background: #444; }
  .row.hard { display: flex; height: 19px; }
  .hard span { width: 17px; }
  .boxes { display: flex; gap: 1px; }
  .boxes button { width: 18px; height: 14px; border: 1px solid #4b4d4f; background: #828486; }
  .boxes .h2 { background: #8a8c8e; } .boxes .h3 { background: #949698; } .boxes .h4 { background: #9d9fa1; } .boxes .h5 { background: #b2b4b6; }
  .next { width: 10px; height: 14px; margin-left: 1px; border: 1px solid #5b5d5f; color: #333; }
  .prop .foot { height: 17px; }

  .gridwrap { height: 135px; display: flex; border-top: 1px solid var(--line); }
  .sizes { flex: 1; display: grid; grid-template-columns: repeat(6, 1fr); grid-template-rows: repeat(4, 30px) 14px; }
  .sizes button { flex-direction: column; justify-content: flex-end; border-right: 1px solid #4b4d4f; border-bottom: 1px solid #4b4d4f; padding-bottom: 2px; line-height: 9px; }
  .sizes button.sel { background: linear-gradient(#7fa2b3, #6a8b9b); }
  .sizes span { flex: 1; display: grid; place-items: center; }
  .sizes i { border-radius: 50%; background: #08090a; display: block; min-width: 1px; }
  .cut { border-right: 1px solid #4b4d4f; overflow: hidden; padding-top: 3px; }
  .cut i { width: 18px; height: 18px; margin: 0 auto; }
  .brushbar b { height: 74px; }
  .wheeltab { width: 26px; }
  .mini { width: 12px; height: 12px; flex: none; border-radius: 50%; background: radial-gradient(#fff 20%, transparent 22%), conic-gradient(#ff0, #0c3, #08f, #20f, #e0c, #f00, #ff0); }
  .color .tab.off { flex: 1; justify-content: center; padding: 0; }
  .wheelbox { flex: 1; display: flex; flex-direction: column; padding: 4px 7px 0 1px; }
  .wheel { position: relative; width: 136px; height: 136px; flex: none; border-radius: 50%; border: 1px solid #555; background: conic-gradient(#ff0, #0f0, #0ff, #00f, #f0f, #f00, #ff0); display: grid; place-items: center; }
  .hole { width: 114px; height: 114px; border-radius: 50%; background: var(--p); border: 1px solid #555; display: grid; place-items: center; }
  .sq { position: relative; width: 74px; height: 74px; border: 1px solid #333; background: linear-gradient(transparent, #000), linear-gradient(90deg, #fff, #0a90ee); }
  .sq i { position: absolute; right: -4px; top: -4px; width: 7px; height: 7px; border: 1px solid #ddd; border-radius: 50%; outline: 1px solid #555; }
  .wheel b { position: absolute; left: 103px; top: 110px; width: 6px; height: 11px; border: 1px solid #fff; outline: 1px solid #222; background: #2a8fe5; transform: rotate(-38deg); }
  .cfoot { display: flex; align-items: flex-end; gap: 4px; margin-top: -19px; position: relative; }
  .cfoot .pair { width: 24px; height: 32px; margin: 0; }
  .cfoot .pair .fore, .cfoot .pair .back { width: 15px; height: 15px; }
  .cfoot .pair .clear { height: 6px; }
  .hsv { display: flex; align-items: center; gap: 2px; margin-left: auto; }
  kbd { font: bold 7px/7px "Liberation Sans", sans-serif; background: #2c2e30; color: #ccc; padding: 0 1px; }

  .center { background: #5b5b5b; border-right: 1px solid #48494b; }
  .cmd { height: 19px; flex: none; display: flex; align-items: center; background: linear-gradient(#757779, #7e8083); padding-top: 1px; }
  .lit { width: 30px; height: 15px; background: linear-gradient(#eee, #c5c5c5); border: 1px solid #fff; flex: none; margin-left: 1px; }
  .lit.help { margin-left: 4px; }
  .cg { display: flex; align-items: center; gap: 4px; padding: 0 4px 0 5px; height: 17px; }
  .cg:nth-child(2) { padding-left: 9px; }
  .cg.sep { border-left: 1px solid #66686b; }
  .snaps button:first-child { background: #696b6e; box-shadow: 0 0 0 1px #5c5e61; }
  .doctabs { height: 17px; flex: none; display: flex; justify-content: space-between; background: #4b4b4c; border-bottom: 1px solid #6d6e6f; }
  .doc { width: 74px; height: 15px; margin-top: 1px; padding: 0 3px; justify-content: space-between; background: linear-gradient(#6f7173, #85878a); font-size: 8px; }
  .doc span { color: #303234; }
  .tick { width: 9px; background: #77797c; border: 2px solid #5b5b5b; }
  .work { flex: 1; display: flex; min-height: 0; }
  .desk { flex: 1; background: #414141; padding: 23px 10px 22px 9px; display: flex; }
  .sheet { flex: 1; background: #fff; }
  .deskbar b { height: 200px; margin-top: 140px; }
  .status { height: 10px; flex: none; display: flex; align-items: center; gap: 5px; background: #77797c; padding-left: 3px; }
  .status output { width: 24px; line-height: 10px; margin-right: -5px; flex: none; }
  .status input { width: 44px; flex: none; }
  .wedge, .bell { height: 10px; border: 1px solid #4f5153; }
  .wedge { background: linear-gradient(to bottom right, #808285 50%, #3c3e40 52%); }
  .bell { background: radial-gradient(ellipse 50% 90% at 50% 0, #808285 98%, #3c3e40) 0 0 / 50% 100% no-repeat, radial-gradient(ellipse 55% 90% at 50% 100%, #3c3e40 98%, #808285) 100% 0 / 50% 100% no-repeat; }
  .wedge::-webkit-slider-thumb, .bell::-webkit-slider-thumb { appearance: none; width: 3px; height: 8px; background: #77797c; border: 1px solid #55575a; }
  .status .ang { width: 17px; }
  .status .bell { width: 58px; }
  .hbar { flex: 1; height: 10px; display: flex; background: #66686a; border-bottom: 1px solid #999; padding-right: 9px; }
  .hbar i { width: 8px; background: #808285; display: grid; place-items: center; }
  .hbar i::after { content: ""; border: 2px solid transparent; }
  .hbar .lf::after { border-right: 3px solid #2f3133; border-left: 0; }
  .hbar .rt::after { border-left: 3px solid #2f3133; border-right: 0; }
  .hbar div { flex: 1; display: grid; grid-template-columns: 30% 39% 1fr; }
  .hbar b { grid-column: 2; background: repeating-linear-gradient(90deg, #4a4c4e 0 1px, transparent 1px 3px) center / 6px 4px no-repeat, #85878a; border: 1px solid #8f9193; }
  .bottom { height: 32px; flex: none; display: flex; gap: 4px; padding: 2px 1px; }
  .bchev { width: 13px; background: #6a6c6e; border: 1px solid #505254; }
  .bchev svg { width: 11px; height: 26px; }
  .bchev path { fill: none; stroke: #999b9d; stroke-width: 2; }
  .bottom button { width: 29px; height: 26px; background: #797b7e; border: 1px solid #444648; }

  .dock { background: #5a5b5d; gap: 4px; border-right: 1px solid #494b4d; }
  .dock .grip { margin-bottom: -4px; padding: 0 2px; gap: 8px; }
  .dock button { margin: 0 1px 0 2px; height: 29px; background: #77797c; border: 1px solid #404244; outline: 1px solid #646668; }

  .right .tabs { margin-right: 2px; }
  .view { height: 122px; padding: 0 1px 0 3px; margin-right: 6px; border: 1px solid #3f4143; border-bottom: 0; background: #515355; }
  .view div { height: 100%; background: #fff; border: solid #7c2427; border-width: 1px 4px 0; }
  .navctl { height: 33px; background: var(--p); margin-right: 5px; padding: 2px 2px 1px 3px; display: grid; grid-template-columns: 60px 34px repeat(5, 1fr); align-items: center; justify-items: center; border-bottom: 1px solid var(--line); }
  .navctl input { width: 60px; } .navctl output { justify-self: end; padding-right: 1px; }
  .lprop { margin-top: 2px; }
  .lbody { display: flex; background: var(--p); border: 1px solid #4a4c4e; margin-right: 5px; }
  .lmain { flex: 1; height: 153px; padding: 0 4px 0 6px; display: flex; flex-direction: column; }
  h2 { font-size: 10px; line-height: 12px; }
  .fx { align-self: flex-end; display: flex; align-items: center; gap: 4px; height: 16px; padding: 0 1px 0 3px; border: 1px solid #6a6c6e; }
  .combo { position: relative; width: 114px; height: 15px; gap: 4px; margin: 2px 0 0 6px; border: 1px solid #626466; background: linear-gradient(#828487, #737578); font-size: 10px; }
  .combo .caret { position: absolute; right: 2px; }
  .trough { width: 9px; background: #66686b; border-left: 1px solid #55575a; }
  .layers { flex: 1; display: flex; flex-direction: column; margin-top: 2px; }
  .layers .tab { gap: 1px; }
  .layers .tab.on { padding: 0 2px 0 3px; }
  .layers .tab.off { padding: 0 1px; }
  .blend { height: 16px; display: flex; align-items: center; gap: 4px; background: var(--p); padding-right: 3px; margin-right: 4px; }
  .mode { position: relative; width: 86px; height: 13px; border: 1px solid #5c5e60; background: linear-gradient(#828487, #737578); font-size: 10px; }
  .mode .caret { position: absolute; right: 2px; }
  .opac { flex: 1; height: 7px; border: 1px solid #4c4e50; background: linear-gradient(90deg, transparent, #ccc), conic-gradient(#999 25%, #ddd 0 50%, #999 0 75%, #ddd 0) 0 0 / 6px 6px; }
  .opac::-webkit-slider-thumb { appearance: none; width: 1px; height: 9px; background: #444; }
  .tb { height: 18px; display: flex; align-items: center; justify-content: space-between; background: var(--p); margin-right: 4px; padding: 0 1px; }
  .box { width: 13px; height: 12px; border: 1px solid #2c2e30; background: #707276; }
  .fr { display: flex; align-items: center; gap: 1px; border: 1px solid #666870; height: 15px; }
  .sp { width: 34px; }
  .layers .lbody { flex: 1; padding-left: 2px; }
  ul { flex: 1; }
  li { height: 25px; display: flex; align-items: stretch; border-bottom: 1px solid #44474a; }
  li > :global(.plain), .pn { width: 14px; border-right: 1px solid #44474a; display: grid; place-items: center; }
  .thumbcell { width: 31px; margin-left: 2px; display: grid; place-items: center; }
  .thumb { width: 26px; height: 20px; background: #fff; border: 1px solid #222; }
  .chk { background: conic-gradient(#ccc 25%, #fff 0 50%, #ccc 0 75%, #fff 0) 0 0 / 6px 6px; }
  li.sel .thumbcell { background: #3f5561; }
  li.sel p { background: linear-gradient(#6a8999, #7796a5); flex: 1; }
  li p { line-height: 11px; padding: 1px 0 0 1px; white-space: nowrap; }
  li p.low { align-self: flex-end; font-size: 10px; }
  .ps { padding: 1px 1px 0; }
</style>
